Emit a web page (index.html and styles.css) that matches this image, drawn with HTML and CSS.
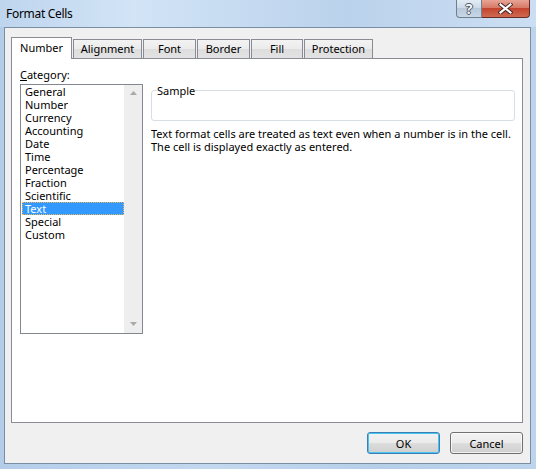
FILE: index.html
```html
<!DOCTYPE html>
<html lang="en">
<head>
    <meta charset="UTF-8">
    <title>Format Cells</title>
    <link rel="stylesheet" href="styles.css">
</head>
<body>
    <div class="window">
        <div class="titlebar">
            <span class="title">Format Cells</span>
            <div class="caption-btns">
                <div class="cbtn help">?</div>
                <div class="cbtn close">
                    <svg width="15" height="11" viewBox="0 0 15 11">
                        <path d="M2.5 1.5 L12.5 9.5 M12.5 1.5 L2.5 9.5" stroke="#3b1f1f" stroke-width="4" stroke-linecap="square"/>
                        <path d="M2.5 1.5 L12.5 9.5 M12.5 1.5 L2.5 9.5" stroke="#ffffff" stroke-width="2.2" stroke-linecap="square"/>
                    </svg>
                </div>
            </div>
        </div>

        <div class="client">
            <div class="tabs">
                <div class="tab active" style="width: 61px">Number</div>
                <div class="tab" style="width: 69px">Alignment</div>
                <div class="tab" style="width: 53px">Font</div>
                <div class="tab" style="width: 53px">Border</div>
                <div class="tab" style="width: 52px">Fill</div>
                <div class="tab" style="width: 69px">Protection</div>
            </div>

            <div class="pane">
                <div class="col-left">
                    <div class="label"><u>C</u>ategory:</div>
                    <div class="listbox">
                        <ul class="items">
                            <li>General</li>
                            <li>Number</li>
                            <li>Currency</li>
                            <li>Accounting</li>
                            <li>Date</li>
                            <li>Time</li>
                            <li>Percentage</li>
                            <li>Fraction</li>
                            <li>Scientific</li>
                            <li class="selected">Text</li>
                            <li>Special</li>
                            <li>Custom</li>
                        </ul>
                        <div class="scrollbar">
                            <svg width="7" height="4" viewBox="0 0 7 4"><path d="M0 4 L3.5 0 L7 4 Z" fill="#a9a9a9"/></svg>
                            <svg width="7" height="4" viewBox="0 0 7 4"><path d="M0 0 L7 0 L3.5 4 Z" fill="#a9a9a9"/></svg>
                        </div>
                    </div>
                </div>

                <div class="col-right">
                    <fieldset class="sample">
                        <legend>Sample</legend>
                        <div class="sample-box"></div>
                    </fieldset>
                    <p class="desc">Text format cells are treated as text even when a number is in the cell.<br>The cell is displayed exactly as entered.</p>
                </div>
            </div>

            <div class="buttons">
                <button class="btn default">OK</button>
                <button class="btn">Cancel</button>
            </div>
        </div>
    </div>
</body>
</html>
```

FILE: styles.css
```css
body {
    margin: 0;
    font-family: "Noto Sans", Arial, sans-serif;
    font-size: 11px;
    color: #000;
}
.window {
    width: 536px;
    height: 469px;
    background: linear-gradient(to right, #b3cde9, #c2d8ef 40%, #b6cfe9 70%, #bcd4ec);
    display: flex;
    flex-direction: column;
}
.titlebar {
    height: 27px;
    display: flex;
    justify-content: space-between;
    align-items: flex-start;
    background: linear-gradient(to right, #bed5ee 0%, #d2e4f6 25%, #c6dbf1 45%, #bbd2ec 65%, #cbdef3 100%);
}
.title {
    padding-left: 6px;
    line-height: 27px;
    font-size: 12px;
    letter-spacing: -0.3px;
}
.caption-btns {
    display: flex;
    margin-right: 6px;
}
.cbtn {
    height: 18px;
    box-sizing: border-box;
    display: flex;
    align-items: center;
    justify-content: center;
}
.help {
    width: 26px;
    border: 1px solid #6e7f92;
    border-top: none;
    border-radius: 0 0 0 4px;
    background: linear-gradient(#e3ebf4, #cbd8e7 50%, #b8c9dc 50%, #c9d7e6);
    font-weight: bold;
    font-size: 14px;
    color: #f4f6f8;
    text-shadow: 1px 0 #4a5868, -1px 0 #4a5868, 0 1px #4a5868, 0 -1px #4a5868;
}
.close {
    width: 48px;
    border: 1px solid #6a2a24;
    border-top: none;
    border-left: none;
    border-radius: 0 0 4px 0;
    background: linear-gradient(#e8a496, #d67a66 45%, #c4442f 50%, #cf6a52);
}
.client {
    margin: 0 5px 0 4px;
    height: 437px;
    box-sizing: border-box;
    border: 1px solid #7a8ea3;
    background: #f0f0f0;
}
.tabs {
    height: 30px;
    padding-left: 6px;
    display: flex;
    align-items: flex-end;
}
.tab {
    box-sizing: border-box;
    height: 19px;
    margin-left: 1px;
    border: 1px solid #898c95;
    border-bottom: none;
    background: linear-gradient(#f3f3f3, #ebebeb 50%, #dddddd 50%, #e3e3e3);
    text-align: center;
    line-height: 17px;
}
.tab.active {
    position: relative;
    z-index: 1;
    height: 22px;
    margin: 0 0 -1px 0;
    background: #fff;
    line-height: 19px;
}
.pane {
    margin: 0 7px 0 6px;
    height: 365px;
    box-sizing: border-box;
    border: 1px solid #898c95;
    background: #fff;
    padding: 9px 0 0 8px;
    display: flex;
    gap: 8px;
}
.col-left {
    width: 123px;
}
.label {
    height: 16px;
    line-height: 14px;
}
.listbox {
    height: 250px;
    box-sizing: border-box;
    border: 1px solid #828790;
    display: flex;
}
.items {
    flex: 1;
    list-style: none;
    margin: 0;
    padding: 0 0 0 1px;
}
.items li {
    height: 13px;
    line-height: 13px;
    padding-left: 3px;
    box-sizing: border-box;
}
.items li.selected {
    background: #3399ff;
    color: #fff;
    outline: 1px dotted #e8b95a;
    outline-offset: -1px;
}
.scrollbar {
    width: 18px;
    background: #eeeeee;
    display: flex;
    flex-direction: column;
    justify-content: space-between;
    align-items: center;
    padding: 6px 0 7px;
}
.col-right {
    width: 364px;
    padding-top: 16px;
}
.sample {
    margin: 0;
    padding: 0 5px;
    border: 1px solid #d5dfe5;
    border-radius: 3px;
}
.sample legend {
    padding: 0;
    line-height: 13px;
}
.sample-box {
    height: 23px;
}
.desc {
    margin: 6px 0 0;
    line-height: 13px;
}
.buttons {
    display: flex;
    justify-content: flex-end;
    gap: 10px;
    padding: 9px 7px 0 0;
}
.btn {
    width: 73px;
    height: 22px;
    padding: 0;
    border: 1px solid #707070;
    border-radius: 3px;
    background: linear-gradient(#f2f2f2, #ebebeb 50%, #dddddd 50%, #cfcfcf);
    box-shadow: inset 0 0 0 1px rgba(255, 255, 255, 0.7);
    font-family: "Noto Sans", Arial, sans-serif;
    font-size: 11px;
    color: #000;
}
.btn.default {
    border-color: #3c7fb1;
    box-shadow: inset 0 0 0 1px #48c3f2;
}
```
